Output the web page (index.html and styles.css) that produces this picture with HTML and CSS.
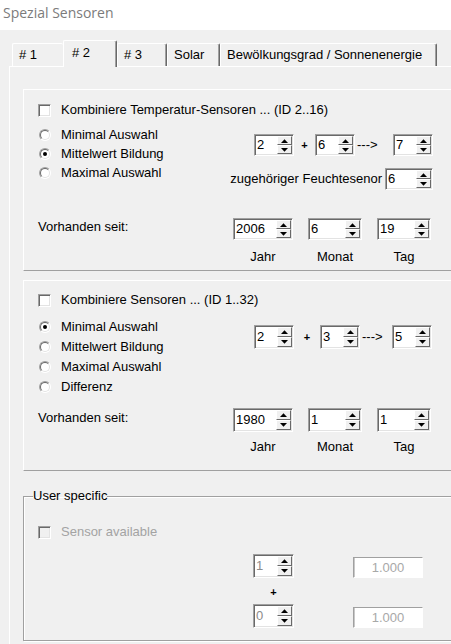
FILE: index.html
```html
<!DOCTYPE html>
<html lang="de">
<head>
<meta charset="utf-8">
<title>Spezial Sensoren</title>
<link rel="stylesheet" href="styles.css">
</head>
<body>
<div class="titlebar">Spezial Sensoren</div>
<div class="client">
  <div class="tabs">
    <div class="tab t1 before-active"># 1</div>
    <div class="tab t2 active"># 2</div>
    <div class="tab t3"># 3</div>
    <div class="tab t4">Solar</div>
    <div class="tab t5">Bewölkungsgrad / Sonnenenergie</div>
  </div>
  <div class="page">

    <div class="group g1">
      <div class="check"><span class="cb"></span><span>Kombiniere Temperatur-Sensoren ... (ID 2..16)</span></div>
      <div class="mid">
        <div class="radios r19">
          <div class="radio"><span class="rb"></span>Minimal Auswahl</div>
          <div class="radio"><span class="rb on"></span>Mittelwert Bildung</div>
          <div class="radio"><span class="rb"></span>Maximal Auswahl</div>
        </div>
        <div class="spins s1">
          <div class="spinrow">
            <div class="spin w40"><span class="val">2</span><span class="btns"><span class="sb"><svg width="7" height="4" viewBox="0 0 7 4"><polygon points="0,4 7,4 3.5,0.2"/></svg></span><span class="sb"><svg width="7" height="4" viewBox="0 0 7 4"><polygon points="0,0 7,0 3.5,3.8"/></svg></span></span></div>
            <span class="plus p1">+</span>
            <div class="spin w40"><span class="val">6</span><span class="btns"><span class="sb"><svg width="7" height="4" viewBox="0 0 7 4"><polygon points="0,4 7,4 3.5,0.2"/></svg></span><span class="sb"><svg width="7" height="4" viewBox="0 0 7 4"><polygon points="0,0 7,0 3.5,3.8"/></svg></span></span></div>
            <span class="arrow a1">---&gt;</span>
            <div class="spin w40"><span class="val">7</span><span class="btns"><span class="sb"><svg width="7" height="4" viewBox="0 0 7 4"><polygon points="0,4 7,4 3.5,0.2"/></svg></span><span class="sb"><svg width="7" height="4" viewBox="0 0 7 4"><polygon points="0,0 7,0 3.5,3.8"/></svg></span></span></div>
          </div>
          <div class="feuchte">
            <span>zugehöriger Feuchtesenor</span>
            <div class="spin w48"><span class="val">6</span><span class="btns"><span class="sb"><svg width="7" height="4" viewBox="0 0 7 4"><polygon points="0,4 7,4 3.5,0.2"/></svg></span><span class="sb"><svg width="7" height="4" viewBox="0 0 7 4"><polygon points="0,0 7,0 3.5,3.8"/></svg></span></span></div>
          </div>
        </div>
      </div>
      <div class="since sn1">
        <span class="since-label">Vorhanden seit:</span>
        <div class="dates">
          <div class="date">
            <div class="spin w60"><span class="val">2006</span><span class="btns"><span class="sb"><svg width="7" height="4" viewBox="0 0 7 4"><polygon points="0,4 7,4 3.5,0.2"/></svg></span><span class="sb"><svg width="7" height="4" viewBox="0 0 7 4"><polygon points="0,0 7,0 3.5,3.8"/></svg></span></span></div>
            <span class="dlabel">Jahr</span>
          </div>
          <div class="date">
            <div class="spin w54"><span class="val">6</span><span class="btns"><span class="sb"><svg width="7" height="4" viewBox="0 0 7 4"><polygon points="0,4 7,4 3.5,0.2"/></svg></span><span class="sb"><svg width="7" height="4" viewBox="0 0 7 4"><polygon points="0,0 7,0 3.5,3.8"/></svg></span></span></div>
            <span class="dlabel">Monat</span>
          </div>
          <div class="date">
            <div class="spin w54"><span class="val">19</span><span class="btns"><span class="sb"><svg width="7" height="4" viewBox="0 0 7 4"><polygon points="0,4 7,4 3.5,0.2"/></svg></span><span class="sb"><svg width="7" height="4" viewBox="0 0 7 4"><polygon points="0,0 7,0 3.5,3.8"/></svg></span></span></div>
            <span class="dlabel">Tag</span>
          </div>
        </div>
      </div>
    </div>

    <div class="group g2">
      <div class="check"><span class="cb"></span><span>Kombiniere Sensoren ... (ID 1..32)</span></div>
      <div class="mid m2">
        <div class="radios r20">
          <div class="radio"><span class="rb on"></span>Minimal Auswahl</div>
          <div class="radio"><span class="rb"></span>Mittelwert Bildung</div>
          <div class="radio"><span class="rb"></span>Maximal Auswahl</div>
          <div class="radio"><span class="rb"></span>Differenz</div>
        </div>
        <div class="spins s2">
          <div class="spinrow">
            <div class="spin w40 tall"><span class="val">2</span><span class="btns"><span class="sb"><svg width="7" height="4" viewBox="0 0 7 4"><polygon points="0,4 7,4 3.5,0.2"/></svg></span><span class="sb"><svg width="7" height="4" viewBox="0 0 7 4"><polygon points="0,0 7,0 3.5,3.8"/></svg></span></span></div>
            <span class="plus p2">+</span>
            <div class="spin w40 tall"><span class="val">3</span><span class="btns"><span class="sb"><svg width="7" height="4" viewBox="0 0 7 4"><polygon points="0,4 7,4 3.5,0.2"/></svg></span><span class="sb"><svg width="7" height="4" viewBox="0 0 7 4"><polygon points="0,0 7,0 3.5,3.8"/></svg></span></span></div>
            <span class="arrow a2">---&gt;</span>
            <div class="spin w40 tall"><span class="val">5</span><span class="btns"><span class="sb"><svg width="7" height="4" viewBox="0 0 7 4"><polygon points="0,4 7,4 3.5,0.2"/></svg></span><span class="sb"><svg width="7" height="4" viewBox="0 0 7 4"><polygon points="0,0 7,0 3.5,3.8"/></svg></span></span></div>
          </div>
        </div>
      </div>
      <div class="since sn2">
        <span class="since-label">Vorhanden seit:</span>
        <div class="dates">
          <div class="date">
            <div class="spin w60 tall"><span class="val">1980</span><span class="btns"><span class="sb"><svg width="7" height="4" viewBox="0 0 7 4"><polygon points="0,4 7,4 3.5,0.2"/></svg></span><span class="sb"><svg width="7" height="4" viewBox="0 0 7 4"><polygon points="0,0 7,0 3.5,3.8"/></svg></span></span></div>
            <span class="dlabel">Jahr</span>
          </div>
          <div class="date">
            <div class="spin w54 tall"><span class="val">1</span><span class="btns"><span class="sb"><svg width="7" height="4" viewBox="0 0 7 4"><polygon points="0,4 7,4 3.5,0.2"/></svg></span><span class="sb"><svg width="7" height="4" viewBox="0 0 7 4"><polygon points="0,0 7,0 3.5,3.8"/></svg></span></span></div>
            <span class="dlabel">Monat</span>
          </div>
          <div class="date">
            <div class="spin w54 tall"><span class="val">1</span><span class="btns"><span class="sb"><svg width="7" height="4" viewBox="0 0 7 4"><polygon points="0,4 7,4 3.5,0.2"/></svg></span><span class="sb"><svg width="7" height="4" viewBox="0 0 7 4"><polygon points="0,0 7,0 3.5,3.8"/></svg></span></span></div>
            <span class="dlabel">Tag</span>
          </div>
        </div>
      </div>
    </div>

    <fieldset class="fs">
      <legend class="fs-legend">User specific</legend>
      <div class="check disabled"><span class="cb"></span><span>Sensor available</span></div>
      <div class="fsrow">
        <div class="fscol">
          <div class="spin w41 tall dis"><span class="val">1</span><span class="btns"><span class="sb"><svg width="7" height="4" viewBox="0 0 7 4"><polygon points="0,4 7,4 3.5,0.2"/></svg></span><span class="sb"><svg width="7" height="4" viewBox="0 0 7 4"><polygon points="0,0 7,0 3.5,3.8"/></svg></span></span></div>
          <span class="plus p3">+</span>
          <div class="spin w41 tall dis"><span class="val">0</span><span class="btns"><span class="sb"><svg width="7" height="4" viewBox="0 0 7 4"><polygon points="0,4 7,4 3.5,0.2"/></svg></span><span class="sb"><svg width="7" height="4" viewBox="0 0 7 4"><polygon points="0,0 7,0 3.5,3.8"/></svg></span></span></div>
        </div>
        <div class="fields">
          <div class="field">1.000</div>
          <div class="field">1.000</div>
        </div>
      </div>
    </fieldset>

  </div>
</div>
</body>
</html>
```

FILE: styles.css
```css
html, body {
  margin: 0;
  padding: 0;
}

body {
  width: 451px;
  height: 644px;
  overflow: hidden;
  background: #f0f0f0;
  font-family: "Liberation Sans", Arial, sans-serif;
  font-size: 13px;
  line-height: 16px;
  color: #000;
}

/* ---------- window title ---------- */
.titlebar {
  height: 30px;
  box-sizing: border-box;
  background: #fff;
  padding: 3px 0 0 3px;
  font-family: "Open Sans", "Noto Sans", sans-serif;
  font-size: 14px;
  line-height: 20px;
  color: #7b7b7b;
}

.client {
  background: #f0f0f0;
  height: 614px;
  overflow: hidden;
}

/* ---------- tabs ---------- */
.tabs {
  display: flex;
  align-items: flex-end;
  height: 23px;
  margin-top: 13px;
  padding-left: 12px;
  position: relative;
  z-index: 1;
}

.tab {
  box-sizing: border-box;
  height: 23px;
  padding-left: 6px;
  line-height: 21px;
  background: #f0f0f0;
  border-top: 1px solid #fff;
  border-left: 1px solid #fff;
  border-right: 1px solid #696969;
  box-shadow: inset -1px 0 0 #a0a0a0;
  border-top-left-radius: 2px;
  border-top-right-radius: 2px;
  white-space: nowrap;
}

.tab.before-active {
  border-right: none;
  box-shadow: none;
}

.tab.active {
  height: 27px;
  margin-bottom: -1px;
  padding-left: 8px;
  line-height: 24px;
}

.t1 { width: 51px; }
.t2 { width: 54px; }
.t3 { width: 50px; }
.t4 { width: 53px; }
.t5 { width: 217px; }

/* ---------- tab page ---------- */
.page {
  margin-left: 9px;
  border-top: 1px solid #fff;
  border-left: 1px solid #fff;
  height: 600px;
}

/* ---------- raised groups ---------- */
.group {
  box-sizing: border-box;
  width: 440px;
  margin-left: 13px;
  border: 1px solid;
  border-color: #fff #a0a0a0 #a0a0a0 #fff;
  padding-left: 14px;
}

.g1 {
  height: 182px;
  margin-top: 22px;
  padding-top: 12px;
}

.g2 {
  height: 191px;
  margin-top: 9px;
  padding-top: 11px;
}

/* ---------- checkbox ---------- */
.check {
  display: flex;
  align-items: center;
  height: 16px;
  white-space: nowrap;
}

.cb {
  box-sizing: border-box;
  width: 13px;
  height: 13px;
  margin-right: 10px;
  background: #fff;
  border: 1px solid;
  border-color: #a0a0a0 #fff #fff #a0a0a0;
  box-shadow: inset 1px 1px 0 #696969, inset -1px -1px 0 #e3e3e3;
  flex: none;
}

.check.disabled {
  color: #a3a3a3;
}

.check.disabled .cb {
  background: #f0f0f0;
}

/* ---------- radios ---------- */
.mid {
  display: flex;
  margin-top: 7px;
}

.mid.m2 {
  margin-top: 9px;
}

.radios {
  width: 216px;
}

.radio {
  display: flex;
  align-items: center;
  white-space: nowrap;
}

.r19 .radio { height: 19px; }
.r20 .radio { height: 20px; }

.rb {
  position: relative;
  box-sizing: border-box;
  width: 12px;
  height: 12px;
  margin: 0 10px 0 1px;
  border-radius: 50%;
  background: #fff;
  border: 1px solid;
  border-color: #a0a0a0 #fff #fff #a0a0a0;
  flex: none;
}

.rb::before {
  content: "";
  position: absolute;
  inset: 0;
  border-radius: 50%;
  border: 1px solid;
  border-color: #696969 #e3e3e3 #e3e3e3 #696969;
}

.rb.on::after {
  content: "";
  position: absolute;
  left: 3px;
  top: 3px;
  width: 4px;
  height: 4px;
  border-radius: 50%;
  background: #000;
}

/* ---------- spin edits ---------- */
.spins {
  display: flex;
  flex-direction: column;
  align-items: flex-end;
  width: 179px;
}

.s1 { padding-top: 9px; }
.s2 { padding-top: 8px; }

.spinrow {
  display: flex;
  align-items: center;
  width: 179px;
}

.spin {
  box-sizing: border-box;
  display: flex;
  height: 22px;
  padding: 1px;
  background: #fff;
  border: 1px solid;
  border-color: #a0a0a0 #fff #fff #a0a0a0;
  box-shadow: inset 1px 1px 0 #696969, inset -1px -1px 0 #e3e3e3;
  flex: none;
}

.spin.tall { height: 24px; }

.w40 { width: 40px; }
.w41 { width: 41px; }
.w48 { width: 48px; }
.w54 { width: 54px; }
.w60 { width: 60px; }

.val {
  flex: 1;
  padding-left: 1px;
  display: flex;
  align-items: center;
  overflow: hidden;
}

.spin.dis .val {
  color: #8c8c8c;
}

.btns {
  display: flex;
  flex-direction: column;
  width: 15px;
  flex: none;
}

.sb {
  flex: 1;
  display: flex;
  align-items: center;
  justify-content: center;
  box-sizing: border-box;
  background: #f0f0f0;
  border: 1px solid;
  border-color: #fff #696969 #696969 #fff;
}

.sb svg {
  display: block;
  fill: #000;
}

.plus {
  font-weight: bold;
  font-size: 11px;
  text-align: center;
}

.p1 { width: 21px; }
.p2 { width: 26px; }

.arrow {
  padding-left: 2px;
  white-space: nowrap;
}

.a1 { width: 36px; }
.a2 { width: 30px; }

.feuchte {
  display: flex;
  align-items: center;
  gap: 3px;
  margin-top: 12px;
  white-space: nowrap;
}

/* ---------- date row ---------- */
.since {
  display: flex;
  align-items: flex-start;
}

.sn1 { margin-top: 28px; }
.sn2 { margin-top: 11px; }

.since-label {
  width: 195px;
  padding-top: 1px;
  white-space: nowrap;
}

.sn2 .since-label { padding-top: 2px; }

.dates {
  display: flex;
  gap: 15px;
}

.date {
  display: flex;
  flex-direction: column;
  align-items: center;
}

.dlabel {
  margin-top: 9px;
}

.sn2 .dlabel { margin-top: 7px; }

/* ---------- fieldset ---------- */
.fs {
  box-sizing: border-box;
  width: 440px;
  height: 152px;
  margin: 18px 0 0 13px;
  padding: 0 0 0 14px;
  border: 1px solid #a0a0a0;
  box-shadow: 1px 1px 0 #fff, inset 1px 1px 0 #fff;
  min-width: 0;
}

.fs-legend {
  padding: 0;
  margin-left: -5px;
  line-height: 14px;
}

.fs .check {
  margin-top: 21px;
}

.fsrow {
  display: flex;
  margin: 14px 0 0 215px;
}

.fscol {
  display: flex;
  flex-direction: column;
  align-items: center;
  width: 41px;
}

.p3 {
  height: 26px;
  line-height: 28px;
}

.fields {
  display: flex;
  flex-direction: column;
  gap: 29px;
  margin-left: 59px;
  padding-top: 3px;
}

.field {
  box-sizing: border-box;
  width: 70px;
  height: 21px;
  line-height: 19px;
  text-align: center;
  color: #a8a8a8;
  background: #fff;
  border: 1px solid;
  border-color: #a0a0a0 #fff #fff #a0a0a0;
  box-shadow: inset 1px 0 0 #c8c8c8;
}
```
